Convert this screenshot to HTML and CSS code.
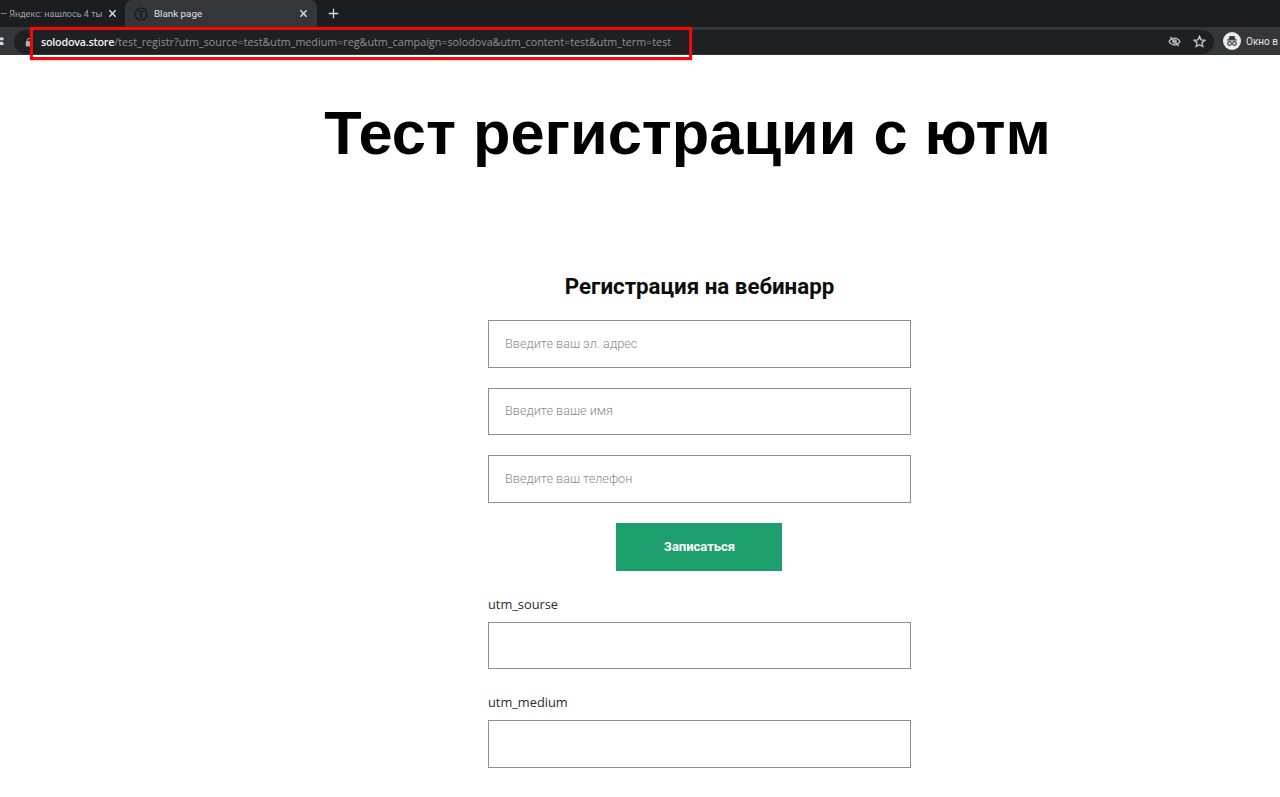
FILE: index.html
```html
<!DOCTYPE html>
<html lang="ru">
<head>
<meta charset="utf-8">
<title>Blank page</title>
<link rel="stylesheet" href="styles.css">
</head>
<body>
<header class="browser">
  <div class="tabstrip">
    <div class="tab tab-inactive">
      <span class="tab-title">— Яндекс: нашлось 4 ты</span>
      <svg class="tab-close" viewBox="0 0 10 10"><path d="M1.5 1.5l7 7M8.5 1.5l-7 7"/></svg>
    </div>
    <div class="tab tab-active">
      <svg class="tab-favicon" viewBox="0 0 14 14"><circle cx="7" cy="7" r="6"/><path d="M4.300 4.300h5.400M7 4.300v6.400"/></svg>
      <span class="tab-title">Blank page</span>
      <svg class="tab-close" viewBox="0 0 10 10"><path d="M1.5 1.5l7 7M8.5 1.5l-7 7"/></svg>
    </div>
    <svg class="new-tab" viewBox="0 0 12 12"><path d="M6 .8v10.4M.8 6h10.4"/></svg>
  </div>
  <div class="toolbar">
    <svg class="reload" viewBox="0 0 4 10"><path d="M0 1.500h3.500v2.800H0zM0 5.700h2a1.500 1.500 0 0 1 1.500 1.500V9H0z"/></svg>
    <div class="omnibox">
      <svg class="lock" viewBox="0 0 10 12"><path class="lock-body" d="M1 5h8v6.500H1z"/><path class="lock-shackle" d="M3 5V3.500a2 2 0 0 1 4 0V5"/></svg>
      <div class="url"><span class="url-host">solodova.store</span>/test_registr?utm_source=test&amp;utm_medium=reg&amp;utm_campaign=solodova&amp;utm_content=test&amp;utm_term=test</div>
      <svg class="eye-off" viewBox="0 0 14 12"><path d="M1 6c3-5 9-5 12 0-3 5-9 5-12 0zM2.500 1l9 10"/><circle cx="7" cy="6" r="1.800"/></svg>
      <svg class="star" viewBox="0 0 14 14"><path d="M7 1.500l1.700 3.700 4 .5-3 2.700.8 4L7 10.500l-3.500 1.900.8-4-3-2.700 4-.5z"/></svg>
    </div>
    <div class="profile">
      <svg class="avatar" viewBox="0 0 18 18"><circle class="avatar-bg" cx="9" cy="9" r="9"/><path class="avatar-hat" d="M5.500 7.500L6.500 4h5l1 3.500H14v1H4v-1z"/><circle class="avatar-eye" cx="6.500" cy="11.500" r="1.800"/><circle class="avatar-eye" cx="11.500" cy="11.500" r="1.800"/></svg>
      <span class="profile-label">Окно в</span>
    </div>
  </div>
</header>
<div class="url-highlight"></div>
<main class="page">
  <h1 class="headline">Тест регистрации с ютм</h1>
  <form class="form">
    <h2 class="form-title">Регистрация на вебинарр</h2>
    <input class="field" type="text" placeholder="Введите ваш эл. адрес">
    <input class="field" type="text" placeholder="Введите ваше имя">
    <input class="field" type="text" placeholder="Введите ваш телефон">
    <button class="submit" type="button">Записаться</button>
    <label class="utm-label">utm_sourse</label>
    <input class="field" type="text">
    <label class="utm-label">utm_medium</label>
    <input class="field" type="text">
    <label class="utm-label">utm_campaign</label>
  </form>
</main>
</body>
</html>
```
FILE: styles.css
```css
* { box-sizing: border-box; }
html, body { margin: 0; height: 100%; overflow: hidden; background: #fff; }
body { font-family: "Liberation Sans", Arial, sans-serif; position: relative; }

.browser { height: 55px; background: #1e1f22; }
.tabstrip { height: 27px; display: flex; align-items: flex-end; background: #1c1d20; }
.tab { height: 27px; display: flex; align-items: center; font-family: Roboto, sans-serif; font-size: 9.800px; }
.tab-inactive { width: 125px; font-size: 9px; color: #a0a1a3; padding-right: 8px; }
.tab-inactive .tab-title { flex: 1; white-space: nowrap; }
.tab-active { width: 192px; background: #35363a; color: #dfe0e2; padding: 0 9px; border-radius: 7px 7px 0 0; }
.tab-active .tab-title { flex: 1; margin-left: 6px; }
.tab-close { width: 9px; height: 9px; flex: none; fill: none; stroke: #dcdcdc; stroke-width: 1.600; }
.tab-favicon { width: 14px; height: 14px; flex: none; fill: none; stroke: #17181a; stroke-width: 1.200; }
.new-tab { width: 11px; height: 11px; margin: 0 0 8px 11px; fill: none; stroke: #d8d9da; stroke-width: 1.400; }

.toolbar { height: 28px; background: #35363a; display: flex; align-items: center; }
.reload { width: 4px; height: 10px; fill: #d6d7d8; flex: none; margin-right: 10px; }
.omnibox { width: 1200px; height: 24px; margin-top: 1px; background: #1f2023; border-radius: 12px; display: flex; align-items: center; padding-left: 11px; flex: none; }
.lock { width: 8px; height: 10px; flex: none; }
.lock-body { fill: #b5b6b8; }
.lock-shackle { fill: none; stroke: #b5b6b8; stroke-width: 1.200; }
.url { flex: 1; margin-left: 8px; font-family: "Open Sans", sans-serif; font-size: 10.750px; color: #8f9194; white-space: nowrap; }
.url-host { color: #f2f2f2; font-weight: 600; letter-spacing: -0.23px; }
.eye-off { width: 13px; height: 11px; fill: none; stroke: #b8b9bb; stroke-width: 1.500; margin-right: 12px; }
.star { width: 13px; height: 13px; fill: none; stroke: #c5c6c8; stroke-width: 1.500; margin-right: 8px; }
.profile { display: flex; align-items: center; flex: none; margin-left: 9px; }
.avatar { width: 18px; height: 18px; flex: none; }
.avatar-bg { fill: #ececec; }
.avatar-hat { fill: #3c3d40; }
.avatar-eye { fill: none; stroke: #3c3d40; stroke-width: 1.200; }
.profile-label { margin-left: 5px; font-family: Roboto, sans-serif; font-size: 10px; color: #e4e4e5; white-space: nowrap; }

.url-highlight { position: absolute; left: 30px; top: 27px; width: 662px; height: 33px; border: 3px solid #e60d0d; box-shadow: 0 0 2px rgba(230, 13, 13, .6); }

.page { display: flex; flex-direction: column; }
.headline { margin: 40px 0 0 95px; height: 76px; line-height: 76px; font-size: 61.300px; font-weight: 700; color: #000; text-align: center; }
.form { width: 423px; margin: 0 0 0 488px; display: flex; flex-direction: column; padding-top: 100px; }
.form-title { margin: 0 0 19px; height: 30px; line-height: 30px; font-family: Roboto, sans-serif; font-size: 22.300px; font-weight: 700; color: #0c0c0c; text-align: center; }
.field { display: block; width: 423px; height: 47.500px; flex: none; margin-bottom: 20px; padding: 0 16px 1px; background: #fff; border: 1px solid #8e8e8e; border-radius: 0; outline: none; font-family: Roboto, sans-serif; font-size: 12.700px; font-weight: 300; }
.field::placeholder { color: #8b8b8b; opacity: 1; }
.submit { display: block; width: 166px; height: 48px; flex: none; align-self: flex-start; margin: 0 0 23px 128px; padding: 0 0 1px 1px; background: #1c9f6c; border: 0; color: #fff; font-family: Roboto, sans-serif; font-size: 13px; font-weight: 700; }
.utm-label { display: block; height: 20px; line-height: 20px; margin-bottom: 8px; font-family: "Open Sans", sans-serif; font-size: 12.800px; color: #2b2b2b; }
.field + .utm-label { margin-top: 3px; }
```
